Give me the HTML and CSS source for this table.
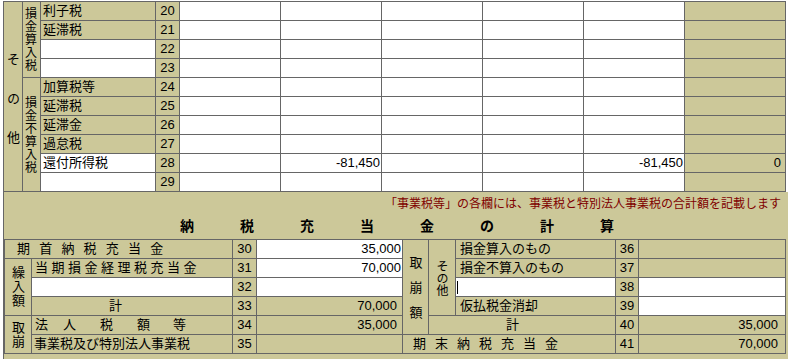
FILE: index.html
```html
<!DOCTYPE html>
<html lang="ja">
<head>
<meta charset="utf-8">
<title>納税充当金の計算</title>
<link rel="stylesheet" href="styles.css">
</head>
<body>
<div class="frame">
  <div class="upper">
    <div class="k vcol span10 pad-sonota"><span class="vt vt-wide">その他</span></div>
    <div class="k vcol span4"><span class="vt vt12">損金算入税</span></div>
    <div class="k lbl">利子税</div><div class="k no">20</div>
    <div class="w"></div><div class="w"></div><div class="w"></div><div class="w"></div><div class="w"></div><div class="k val"></div>

    <div class="k lbl">延滞税</div><div class="k no">21</div>
    <div class="w"></div><div class="w"></div><div class="w"></div><div class="w"></div><div class="w"></div><div class="k val"></div>

    <div class="w lbl"></div><div class="k no">22</div>
    <div class="w"></div><div class="w"></div><div class="w"></div><div class="w"></div><div class="w"></div><div class="k val"></div>

    <div class="w lbl"></div><div class="k no">23</div>
    <div class="w"></div><div class="w"></div><div class="w"></div><div class="w"></div><div class="w"></div><div class="k val"></div>

    <div class="k vcol span6"><span class="vt vt12">損金不算入税</span></div>
    <div class="k lbl">加算税等</div><div class="k no">24</div>
    <div class="w"></div><div class="w"></div><div class="w"></div><div class="w"></div><div class="w"></div><div class="k val"></div>

    <div class="k lbl">延滞税</div><div class="k no">25</div>
    <div class="w"></div><div class="w"></div><div class="w"></div><div class="w"></div><div class="w"></div><div class="k val"></div>

    <div class="k lbl">延滞金</div><div class="k no">26</div>
    <div class="w"></div><div class="w"></div><div class="w"></div><div class="w"></div><div class="w"></div><div class="k val"></div>

    <div class="k lbl">過怠税</div><div class="k no">27</div>
    <div class="w"></div><div class="w"></div><div class="w"></div><div class="w"></div><div class="w"></div><div class="k val"></div>

    <div class="w lbl">還付所得税</div><div class="k no">28</div>
    <div class="w"></div><div class="w num">-81,450</div><div class="w"></div><div class="w"></div><div class="w num">-81,450</div><div class="k val num">0</div>

    <div class="w lbl"></div><div class="k no">29</div>
    <div class="w"></div><div class="w"></div><div class="w"></div><div class="w"></div><div class="w"></div><div class="k val"></div>
  </div>

  <div class="lower">
    <div class="note">「事業税等」の各欄には、事業税と特別法人事業税の合計額を記載します</div>
    <div class="title"><span>納</span><span>税</span><span>充</span><span>当</span><span>金</span><span>の</span><span>計</span><span>算</span></div>

    <div class="calc">
      <div class="k lbl span2c spaced1">期首納税充当金</div>
      <div class="k no">30</div>
      <div class="w num">35,000</div>
      <div class="k vcol span5 pad-torikuzushi"><span class="vt vt-mid">取崩額</span></div>
      <div class="k vcol span4"><span class="vt vt-small">その他</span></div>
      <div class="k lbl lbl-r">損金算入のもの</div>
      <div class="k no">36</div>
      <div class="k"></div>

      <div class="k vcol span3"><span class="vt vt13">繰入額</span></div>
      <div class="k lbl spaced2">当期損金経理税充当金</div>
      <div class="k no">31</div>
      <div class="w num">70,000</div>
      <div class="k lbl lbl-r">損金不算入のもの</div>
      <div class="k no">37</div>
      <div class="k"></div>

      <div class="w"></div>
      <div class="k no">32</div>
      <div class="w"></div>
      <div class="w lbl-cursor"><span class="caret"></span></div>
      <div class="k no">38</div>
      <div class="w"></div>

      <div class="k lbl total">計</div>
      <div class="k no">33</div>
      <div class="k num num-l">70,000</div>
      <div class="k lbl lbl-r">仮払税金消却</div>
      <div class="k no">39</div>
      <div class="w"></div>

      <div class="k vcol span2"><span class="vt vt13">取崩</span></div>
      <div class="k lbl spread"><span class="s1">法</span><span class="s2">人</span><span class="s3">税</span><span class="s4">額</span><span>等</span></div>
      <div class="k no">34</div>
      <div class="k num num-l">35,000</div>
      <div class="k lbl total span2c">計</div>
      <div class="k no">40</div>
      <div class="k num num-r">35,000</div>

      <div class="k lbl">事業税及び特別法人事業税</div>
      <div class="k no">35</div>
      <div class="k"></div>
      <div class="k lbl span3c spaced3">期末納税充当金</div>
      <div class="k no">41</div>
      <div class="k num num-r">70,000</div>
    </div>
  </div>
</div>
</body>
</html>
```

FILE: styles.css
```css
html, body {
  margin: 0;
  padding: 0;
  background: #ffffff;
}

body {
  font-family: "Liberation Sans", "Noto Sans CJK JP", sans-serif;
  font-size: 13px;
  color: #000000;
}

.frame {
  margin-left: 3px;
  width: 785px;
}

.upper {
  display: grid;
  grid-template-columns: 18px 17px 114px 23px repeat(6, 100px);
  grid-template-rows: repeat(10, 18px);
  gap: 1px;
  padding: 1px;
  width: 781px;
  margin-top: 1px;
  background: #666666;
}

.k { background: #ccc899; }
.w { background: #ffffff; }

.lbl {
  display: flex;
  align-items: center;
  padding-left: 2px;
  line-height: 18px;
  white-space: nowrap;
  overflow: hidden;
}

.no {
  display: flex;
  align-items: center;
  justify-content: center;
  line-height: 18px;
}

.num {
  display: flex;
  align-items: center;
  justify-content: flex-end;
  padding-right: 1px;
  line-height: 18px;
}

.val.num { padding-right: 4px; }
.num-l { padding-right: 5px; }
.num-r { padding-right: 7px; }

/* vertical labels */
.vcol {
  display: flex;
  align-items: center;
  justify-content: center;
  overflow: hidden;
}

.vt {
  writing-mode: vertical-rl;
  text-orientation: upright;
  font-family: "Noto Sans CJK JP", sans-serif;
  line-height: 14px;
  white-space: nowrap;
}

.vt12 { font-size: 12px; letter-spacing: 1px; margin-right: 2px; }
.vt13 { font-size: 13px; letter-spacing: 1px; }
.vt-wide { font-size: 13px; letter-spacing: 26px; }
.vt-mid { font-size: 13px; letter-spacing: 12px; }
.vt-small { font-size: 12px; }

.pad-sonota { padding-top: 30px; }
.pad-torikuzushi { padding-top: 12px; }

.span10 { grid-row: span 10; }
.span6 { grid-row: span 6; }
.span5 { grid-row: span 5; }
.span4 { grid-row: span 4; }
.span3 { grid-row: span 3; }
.span2 { grid-row: span 2; }
.span2c { grid-column: span 2; }
.span3c { grid-column: span 3; }

.lower {
  background: #ccc899;
  border-left: 1px solid #666666;
  padding-bottom: 8px;
}

.note {
  height: 20px;
  padding-top: 2px;
  line-height: 20px;
  font-size: 12px;
  color: #800000;
  text-align: right;
  padding-right: 7px;
  white-space: nowrap;
}

.title {
  height: 25px;
  line-height: 25px;
  padding-left: 176px;
  font-size: 14px;
  font-weight: bold;
  white-space: nowrap;
}

.title span {
  display: inline-block;
  width: 60px;
}

.calc {
  display: grid;
  grid-template-columns: 26px 200px 23px 145px 25px 26px 159px 22px 146px;
  grid-template-rows: repeat(6, 18px);
  gap: 1px;
  padding: 1px;
  width: 780px;
  background: #666666;
}

.spaced1 { padding-left: 12px; letter-spacing: 9.2px; }
.spaced2 { padding-left: 3px; letter-spacing: 3.5px; }
.spaced3 { padding-left: 10px; letter-spacing: 9px; }
.lbl-r { padding-left: 4px; }
.total { padding-left: 77px; }

.spread { padding-left: 3px; }
.spread span { display: inline-block; }
.s1 { margin-right: 15px; }
.s2 { margin-right: 24px; }
.s3 { margin-right: 24px; }
.s4 { margin-right: 23px; }

.lbl-cursor {
  display: flex;
  align-items: center;
  padding-left: 1px;
}

.caret {
  display: block;
  width: 1px;
  height: 13px;
  background: #000000;
}
```
